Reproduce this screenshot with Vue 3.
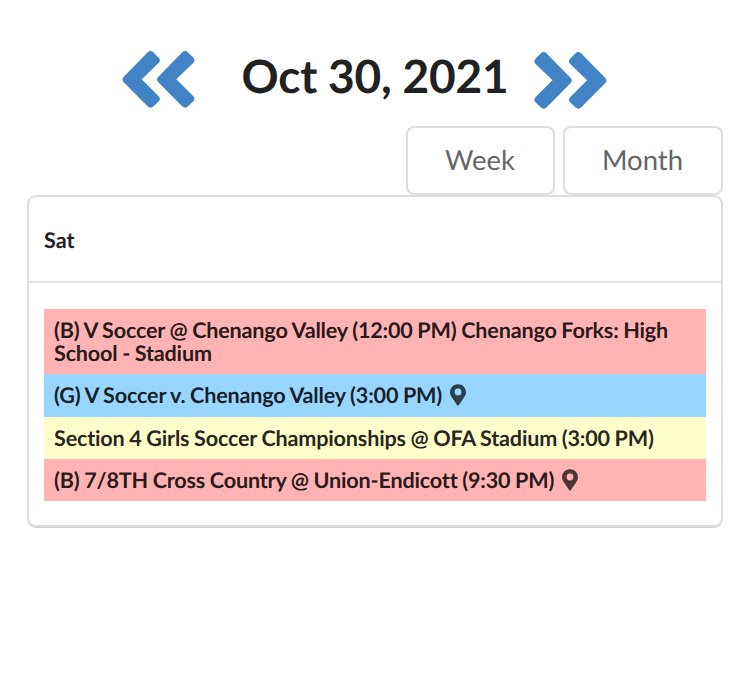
<template>
  <div class="calendar">
    <!-- Date navigation -->
    <div class="date-nav">
      <button class="nav-btn" aria-label="Previous day">
        <svg width="74" height="60" viewBox="0 0 74 60">
          <path :d="chevron" />
          <path :d="chevron" transform="translate(34.6 0)" />
        </svg>
      </button>
      <h1 class="date-title">Oct 30, 2021</h1>
      <button class="nav-btn next" aria-label="Next day">
        <svg width="74" height="60" viewBox="0 0 74 60">
          <g transform="translate(72.8 0) scale(-1 1)">
            <path :d="chevron" />
            <path :d="chevron" transform="translate(34.6 0)" />
          </g>
        </svg>
      </button>
    </div>

    <!-- View switch -->
    <div class="views">
      <button class="view-btn week">Week</button>
      <button class="view-btn month">Month</button>
    </div>

    <!-- Day -->
    <div class="day-card">
      <div class="day-head">Sat</div>
      <div class="day-body">
        <div v-for="e in events" :key="e.text" class="event" :class="e.color">
          <span>{{ e.text }}</span>
          <svg v-if="e.pin" class="pin" width="16" height="22" viewBox="0 0 16 22">
            <path
              fill-rule="evenodd"
              d="M8 .3C3.6.3 0 3.7 0 8c0 2.4.9 3.9 2.3 6l4.8 6.9c.5.7 1.3.7 1.8 0l4.8-6.9c1.4-2.1 2.3-3.6 2.3-6C16 3.7 12.4.3 8 .3zM8 4.6a3.4 3.4 0 1 1 0 6.8a3.4 3.4 0 0 1 0-6.8z"
            />
          </svg>
        </div>
      </div>
    </div>
  </div>
</template>

<script setup>
const chevron =
  'M1.5 27L25.5 2.5Q28.5-.3 31.5 2.5L36.5 7.5Q39.3 10.2 36.5 13L19.7 29.3L36.5 46Q39.3 49 36.5 51.5L31.5 56.3Q28.5 59 25.5 56.3L1.5 32Q-.7 29.5 1.5 27Z'

const events = [
  {
    text: '(B) V Soccer @ Chenango Valley (12:00 PM) Chenango Forks: High School - Stadium',
    color: 'red'
  },
  { text: '(G) V Soccer v. Chenango Valley (3:00 PM)', color: 'blue', pin: true },
  { text: 'Section 4 Girls Soccer Championships @ OFA Stadium (3:00 PM)', color: 'yellow' },
  { text: '(B) 7/8TH Cross Country @ Union-Endicott (9:30 PM)', color: 'red', pin: true }
]
</script>

<style>
body {
  background: #fff;
}
</style>

<style scoped>
.calendar,
.calendar * {
  box-sizing: border-box;
}

.calendar {
  width: 750px;
  height: 688px;
  padding: 50px 27px 0;
  font-family: Lato, sans-serif;
  font-variant-ligatures: none;
  text-rendering: geometricPrecision;
  color: #212121;
}

.date-nav {
  display: flex;
  align-items: flex-start;
  height: 76px;
  padding-left: 95px;
}

.nav-btn {
  flex: none;
  width: 74px;
  height: 60px;
  padding: 0;
  border: none;
  background: transparent;
  cursor: pointer;
}
.nav-btn svg {
  display: block;
  fill: #4183c4;
}
.nav-btn.next {
  margin-top: 1px;
}

.date-title {
  width: 338px;
  margin: 0;
  padding-left: 20px;
  font-size: 46px;
  font-weight: 700;
  line-height: 52px;
  letter-spacing: -0.2px;
  text-align: center;
  white-space: nowrap;
}

/* view buttons */
.views {
  display: flex;
  justify-content: flex-end;
  gap: 8px;
  height: 69px;
}

.view-btn {
  height: 69px;
  padding: 0 1px 3px 0;
  border: 2px solid #dededf;
  border-radius: 8px;
  background: #fff;
  font-family: inherit;
  font-size: 27.5px;
  text-rendering: inherit;
  color: #666;
  cursor: pointer;
}
.week { width: 149px; }
.month { width: 160px; }

/* day table */
.day-card {
  height: 332px;
  border: 2px solid #dededf;
  border-radius: 9px;
  box-shadow: 0 1px 0 #d0d0d1;
}

.day-head {
  height: 86px;
  padding: 28px 15px 0;
  border-bottom: 2px solid #e2e2e3;
  font-size: 21.6px;
  font-weight: 700;
  line-height: 30px;
}

.day-body {
  padding: 26px 15px 0;
}

.event {
  padding: 9.9px 10px 9.3px;
  font-size: 21.6px;
  font-weight: 700;
  line-height: 23.1px;
  letter-spacing: -0.18px;
  word-spacing: -0.4px;
  color: rgba(0, 0, 0, 0.87);
}
.red { background: #ffb3b3; }
.blue { background: #99d6ff; }
.yellow { background: #ffffcc; }

.pin {
  height: 22px;
  margin: -2px 0 -2px 8px;
  vertical-align: -3px;
  position: relative;
  top: -2px;
  fill: rgba(0, 0, 0, 0.7);
}
</style>
